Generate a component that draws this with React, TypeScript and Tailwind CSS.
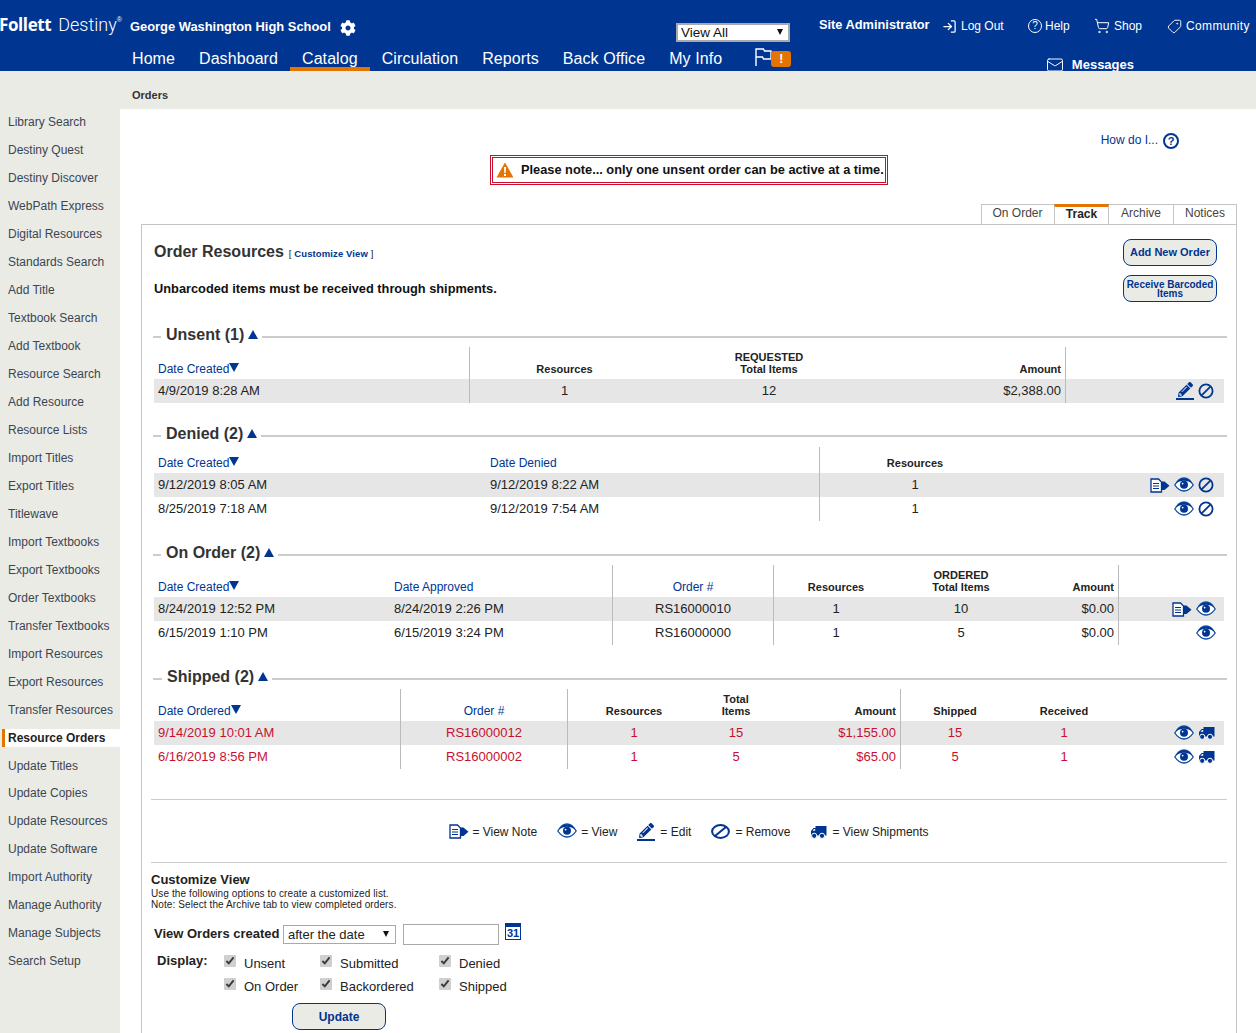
import { FaCog, FaPencilAlt } from 'react-icons/fa';
import { LogIn, ShoppingCart, Tag, Mail } from 'lucide-react';

const sideTop = [
    'Library Search', 'Destiny Quest', 'Destiny Discover', 'WebPath Express', 'Digital Resources',
    'Standards Search', 'Add Title', 'Textbook Search', 'Add Textbook', 'Resource Search', 'Add Resource',
    'Resource Lists', 'Import Titles', 'Export Titles', 'Titlewave', 'Import Textbooks', 'Export Textbooks',
    'Order Textbooks', 'Transfer Textbooks', 'Import Resources', 'Export Resources', 'Transfer Resources',
    'Resource Orders', 'Update Titles',
];
const sideBottom = [
    'Update Copies', 'Update Resources', 'Update Software', 'Import Authority', 'Manage Authority',
    'Manage Subjects', 'Search Setup',
];
const navItems = ['Home', 'Dashboard', 'Catalog', 'Circulation', 'Reports', 'Back Office', 'My Info'];

function BanIcon() {
    return (
        <svg width="16" height="16" viewBox="0 0 16 16" fill="none" stroke="#003591" strokeWidth="1.8" className="shrink-0">
            <circle cx="8" cy="8" r="6.6" />
            <path d="M3.6 12.4 12.4 3.6" />
        </svg>
    );
}

function EyeIcon() {
    return (
        <svg width="20" height="15" viewBox="0 0 20 15" className="mb-[2px] shrink-0">
            <path d="M0.8 8C3.5 3.4 6.5 1 10 1s6.5 2.4 9.2 7c-2.7 4-5.7 6-9.2 6S3.500 12 0.8 8z" fill="#fff" stroke="#0a4aa0" strokeWidth="1.3" />
            <path d="M1.500 6.800C4 3 6.800 1.400 10 1.400s6 1.600 8.500 5.400C16 4.700 13 3.700 10 3.700S4 4.700 1.500 6.800z" fill="#003591" />
            <circle cx="10" cy="7.800" r="4" fill="#003591" />
            <circle cx="8.600" cy="6.600" r="0.9" fill="#fff" />
        </svg>
    );
}

function EditIcon() {
    return (
        <span className="flex h-[18px] w-[18px] shrink-0 flex-col items-center justify-end border-b-2 border-[#003591]">
            <FaPencilAlt className="mb-px h-[15px] w-[15px] text-[#003591]" />
        </span>
    );
}

function NoteIcon() {
    return (
        <svg width="20" height="15" viewBox="0 0 20 15" className="shrink-0">
            <path d="M1 1h7.500l3 3v10H1z" fill="#fff" stroke="#003591" strokeWidth="1.3" />
            <path d="M3 5.500h6M3 8h6M3 10.500h6" stroke="#003591" strokeWidth="1.1" />
            <path d="M12 3.500h2.500L19.500 7.800 14.500 12H12z" fill="#003591" />
        </svg>
    );
}

function TruckIcon() {
    return (
        <svg width="17" height="14" viewBox="0 0 17 14" className="shrink-0">
            <path d="M5.500 1h11v9.500H1V6l2.500-3h2z" fill="#003591" />
            <path d="M2.600 5.800 4 4h1.200v1.800z" fill="#fff" />
            <circle cx="4.200" cy="10.800" r="2.600" fill="#003591" stroke="#fff" strokeWidth="1" />
            <circle cx="12" cy="10.800" r="2.600" fill="#003591" stroke="#fff" strokeWidth="1" />
        </svg>
    );
}

function SortDown() {
    return <span className="inline-block h-0 w-0 border-x-[5px] border-t-[9px] border-x-transparent border-t-[#003591] align-[1px]" />;
}

function SectionHead({ title, wide }: { title: string; wide?: boolean }) {
    return (
        <div className="flex h-[20px] items-center">
            <div className={`mt-[6px] h-[2px] shrink-0 bg-[#cccccc] ${wide ? 'w-[9px]' : 'w-[8px]'}`} />
            <h3 className="ml-[5px] whitespace-nowrap pt-[2px] text-[16px] font-bold leading-[20px] text-[#333333]">{title}</h3>
            <span className="mx-[4px] mt-[1px] h-0 w-0 border-x-[5.5px] border-b-[9px] border-x-transparent border-b-[#003591]" />
            <div className="mt-[6px] h-[2px] grow bg-[#cccccc]" />
        </div>
    );
}

function Link({ children }: { children: React.ReactNode }) {
    return <span className="text-[12px] font-normal text-[#003591]">{children}</span>;
}

function DateSort({ label }: { label: string }) {
    return (
        <Link>
            {label}
            <SortDown />
        </Link>
    );
}

type TableProps = {
    grid: string;
    cells: string[];
    head: React.ReactNode[];
    rows: React.ReactNode[][];
    headHeight: string;
    red?: boolean;
};

function OrderTable({ grid, cells, head, rows, headHeight, red }: TableProps) {
    return (
        <div className="ml-px w-[1070px]">
            <div className={`grid ${grid} ${headHeight} text-[11px] font-bold leading-[12px] text-[#222222]`}>
                {head.map((h, i) => (
                    <div key={i} className={`flex flex-col justify-end pb-[4px] ${cells[i]}`}>{h}</div>
                ))}
            </div>
            {rows.map((row, r) => (
                <div
                    key={r}
                    className={`grid h-[24px] ${grid} text-[13px] leading-[24px] ${r === 0 ? 'bg-[#e6e6e6]' : ''} ${red ? 'text-[#c8102e]' : 'text-[#222222]'}`}
                >
                    {row.map((c, i) => (
                        <div key={i} className={cells[i]}>{c}</div>
                    ))}
                </div>
            ))}
        </div>
    );
}

function Actions({ pad, children }: { pad: string; children: React.ReactNode }) {
    return <div className={`flex h-full items-center justify-end gap-[4px] ${pad}`}>{children}</div>;
}

function Check({ label }: { label: string }) {
    return (
        <label className="flex h-[23px] items-center gap-[8px] text-[13px] text-[#222222]">
            <input type="checkbox" defaultChecked className="mb-[6px] h-[12px] w-[12px] accent-[#d0d0d0]" />
            {label}
        </label>
    );
}

function Dropdown({ value, box, text }: { value: string; box: string; text: string }) {
    return (
        <div className={`relative ${box}`}>
            <select defaultValue={value} className={`block h-full w-full appearance-none bg-white ${text}`}>
                <option>{value}</option>
            </select>
            <span className="pointer-events-none absolute right-[7px] top-[6px] h-0 w-0 border-x-[3.5px] border-t-[6px] border-x-transparent border-t-[#111111]" />
        </div>
    );
}

const divider = 'border-r border-[#bbbbbb]';

export default function App() {
    return (
        <div className="flex h-screen flex-col overflow-hidden bg-white font-['Liberation_Sans',Arial,sans-serif]">
            {/* top bar */}
            <header className="h-[71px] shrink-0 overflow-hidden bg-[#003591] text-white">
                <div className="flex h-[44px] items-start">
                    <div className="mt-[13px] flex w-[130px] items-start whitespace-nowrap leading-[24px]">
                        <span className="-ml-px text-[17px] font-bold font-['Open_Sans',sans-serif] tracking-[-0.4px]">Follett</span>
                        <span className="ml-[7px] text-[18px] font-light font-['Roboto',sans-serif]">Destiny</span>
                        <span className="text-[7px] leading-[14px]">®</span>
                    </div>
                    <div className="mt-[19px] w-[210px] whitespace-nowrap text-[12.9px] font-bold leading-[15px]">George Washington High School</div>
                    <div className="mt-[20px] w-[336px]"><FaCog className="h-[16px] w-[16px]" /></div>
                    <Dropdown value="View All" box="mt-[23px] h-[19px] w-[114px]" text="border-2 border-[#a9a9a9] pl-[3px] text-[13.5px] leading-[15px] text-[#111111]" />
                    <div className="ml-[29px] mt-[17px] w-[123px] whitespace-nowrap text-[12.8px] font-bold leading-[16px]">Site Administrator</div>
                    <div className="mt-[18px] flex w-[86px] items-center gap-[4px] text-[12px] leading-[16px]"><LogIn className="h-[15px] w-[15px]" />Log Out</div>
                    <div className="mt-[18px] flex w-[66px] items-center gap-[3px] text-[12px] leading-[16px]">
                        <span className="flex h-[14px] w-[14px] items-center justify-center rounded-full border border-white text-[10px] leading-none">?</span>Help
                    </div>
                    <div className="mt-[18px] flex w-[73px] items-center gap-[4px] text-[12px] leading-[16px]"><ShoppingCart className="h-[16px] w-[16px]" strokeWidth={1.5} />Shop</div>
                    <div className="mt-[18px] flex items-center gap-[4px] whitespace-nowrap text-[12px] leading-[16px] tracking-[0.35px]"><Tag className="h-[15px] w-[15px] -scale-x-100" strokeWidth={1.5} />Community</div>
                </div>
                <div className="flex h-[27px] pl-[120px]">
                    {navItems.map((n) => (
                        <a key={n} className={`box-border h-[27px] px-[12px] pt-[5px] text-[16px] leading-[20px] tracking-[0.08px] ${n === 'Catalog' ? 'border-b-4 border-[#e37400]' : ''}`}>{n}</a>
                    ))}
                    <div className="relative ml-[21px] mt-[4px] h-[19px] w-[17px]">
                        <svg width="17" height="19" viewBox="0 0 17 19" fill="none" stroke="#fff" strokeWidth="1.4">
                            <path d="M1 18V1h7.500l1 2H16v8H8.500l-1-2H1" />
                        </svg>
                        <span className="absolute left-[16px] top-[3px] flex h-[16px] w-[20px] items-center justify-center rounded-[3px] bg-[#e37400] text-[12px] font-bold leading-none">!</span>
                    </div>
                    <div className="ml-auto mr-[122px] mt-[13px] flex items-start gap-[8px]">
                        <Mail className="mt-[-1px] h-[18px] w-[18px]" strokeWidth={1.3} />
                        <span className="text-[13px] font-bold leading-[15px]">Messages</span>
                    </div>
                </div>
            </header>

            {/* breadcrumb */}
            <div className="h-[38px] shrink-0 bg-[#ebebe6] pl-[132px] pt-[18px] text-[11px] font-bold leading-[13px] text-[#333333]">Orders</div>

            <div className="flex min-h-0 grow">
                {/* side menu */}
                <aside className="w-[120px] shrink-0 bg-[#ebebe6] text-[12px] text-[#3a4652]">
                    <ul className="-mt-px">
                        {sideTop.map((s) =>
                            s === 'Resource Orders' ? (
                                <li key={s} className="flex h-[28px] items-center">
                                    <div className="ml-[2px] flex h-[18px] grow items-center border-l-[3px] border-[#e37400] bg-white pl-[3px] font-bold text-[#222222]">{s}</div>
                                </li>
                            ) : (
                                <li key={s} className="flex h-[28px] items-center whitespace-nowrap pl-[8px]">{s}</li>
                            ),
                        )}
                    </ul>
                    <ul className="-mt-px">
                        {sideBottom.map((s) => (
                            <li key={s} className="flex h-[28px] items-center whitespace-nowrap pl-[8px]">{s}</li>
                        ))}
                    </ul>
                </aside>

                <main className="flex min-w-0 grow flex-col pl-[21px] pr-[19px]">
                    <div className="flex h-[46px] items-start justify-end gap-[5px] pr-[58px] pt-[23px] text-[12px] leading-[16px] text-[#003591]">
                        How do I...
                        <span className="mt-px flex h-[16px] w-[16px] items-center justify-center rounded-full border-2 border-[#003591] text-[11px] font-bold leading-none">?</span>
                    </div>
                    <div className="flex justify-center">
                        <div className="flex h-[30px] w-[398px] items-center gap-[7px] border-[3px] border-double border-[#c8102e] pl-[3px] text-[12.8px] font-bold text-[#111111]">
                            <svg width="18" height="16" viewBox="0 0 18 16" className="shrink-0">
                                <path d="M9 0.500 17.500 15.500H0.500z" fill="#e37400" />
                                <path d="M8 5h2l-.3 6H8.300zM8 12h2v2H8z" fill="#fff" />
                            </svg>
                            <span className="whitespace-nowrap">Please note... only one unsent order can be active at a time.</span>
                        </div>
                    </div>

                    {/* tabs */}
                    <div className="mt-[19px] flex h-[20px] justify-end text-[12px] leading-[16px] text-[#444444]">
                        <div className="w-[73px] border-l border-t border-[#c4c4c4] pr-px text-center">On Order</div>
                        <div className="w-[55px] border-x border-t-[3px] border-x-[#c4c4c4] border-t-[#e37400] text-center font-bold leading-[14px] text-[#222222]">Track</div>
                        <div className="w-[64px] border-t border-[#c4c4c4] text-center">Archive</div>
                        <div className="w-[64px] border-x border-t border-[#c4c4c4] text-center">Notices</div>
                    </div>

                    <section className="grow border-x border-t border-[#c4c4c4] pl-[11px] pr-[9px]">
                        <div className="flex h-[99px] justify-between">
                            <div className="pl-px">
                                <div className="mt-[17px] flex items-baseline gap-[5px] leading-[20px]">
                                    <h2 className="text-[16px] font-bold text-[#333333]">Order Resources</h2>
                                    <span className="text-[9.5px] font-bold tracking-[0.1px] text-[#003591]"><span className="font-normal text-[#222222]">[</span> Customize View <span className="font-normal text-[#222222]">]</span></span>
                                </div>
                                <p className="mt-[17px] text-[12.8px] font-bold leading-[16px] text-[#111111]">Unbarcoded items must be received through shipments.</p>
                            </div>
                            <div className="mr-[10px] mt-[14px] flex w-[94px] flex-col gap-[9px] text-center font-bold text-[#003591]">
                                <button className="h-[27px] rounded-lg border border-[#003591] bg-[#ebebe6] text-[11px]">Add New Order</button>
                                <button className="h-[27px] rounded-lg border border-[#003591] bg-[#ebebe6] text-[10px] leading-[9px]">Receive Barcoded Items</button>
                            </div>
                        </div>

                        <SectionHead title="Unsent (1)" />
                        <div className="mt-[3px]">
                            <OrderTable
                                grid="grid-cols-[316px_189px_220px_187px_1fr]"
                                headHeight="h-[32px]"
                                cells={[`pl-[4px] ${divider}`, 'text-center', 'text-center', `pr-[4px] text-right ${divider}`, '']}
                                head={[
                                    <DateSort label="Date Created" />,
                                    'Resources',
                                    <>REQUESTED<br />Total Items</>,
                                    'Amount',
                                    '',
                                ]}
                                rows={[['4/9/2019 8:28 AM', '1', '12', '$2,388.00', <Actions pad="pr-[10px]"><EditIcon /><BanIcon /></Actions>]]}
                            />
                        </div>

                        <div className="mt-[20px]"><SectionHead title="Denied (2)" /></div>
                        <div className="mt-[4px]">
                            <OrderTable
                                grid="grid-cols-[332px_334px_190px_1fr]"
                                headHeight="h-[26px]"
                                cells={['pl-[4px]', `pl-[4px] ${divider}`, 'text-center', '']}
                                head={[<DateSort label="Date Created" />, <Link>Date Denied</Link>, 'Resources', '']}
                                rows={[
                                    ['9/12/2019 8:05 AM', '9/12/2019 8:22 AM', '1', <Actions pad="pr-[10px]"><NoteIcon /><EyeIcon /><BanIcon /></Actions>],
                                    ['8/25/2019 7:18 AM', '9/12/2019 7:54 AM', '1', <Actions pad="pr-[10px]"><EyeIcon /><BanIcon /></Actions>],
                                ]}
                            />
                        </div>

                        <div className="mt-[21px]"><SectionHead title="On Order (2)" /></div>
                        <div className="mt-[3px]">
                            <OrderTable
                                grid="grid-cols-[236px_223px_161px_124px_126px_95px_1fr]"
                                headHeight="h-[32px]"
                                cells={['pl-[4px]', `pl-[4px] ${divider}`, `text-center ${divider}`, 'text-center', 'text-center', `pr-[4px] text-right ${divider}`, '']}
                                head={[
                                    <DateSort label="Date Created" />,
                                    <Link>Date Approved</Link>,
                                    <Link>Order #</Link>,
                                    'Resources',
                                    <>ORDERED<br />Total Items</>,
                                    'Amount',
                                    '',
                                ]}
                                rows={[
                                    ['8/24/2019 12:52 PM', '8/24/2019 2:26 PM', 'RS16000010', '1', '10', '$0.00', <Actions pad="pr-[8px]"><NoteIcon /><EyeIcon /></Actions>],
                                    ['6/15/2019 1:10 PM', '6/15/2019 3:24 PM', 'RS16000000', '1', '5', '$0.00', <Actions pad="pr-[8px]"><EyeIcon /></Actions>],
                                ]}
                            />
                        </div>

                        <div className="mt-[21px]"><SectionHead title="Shipped (2)" wide /></div>
                        <div className="mt-[3px]">
                            <OrderTable
                                red
                                grid="grid-cols-[247px_167px_132px_72px_129px_108px_110px_1fr]"
                                headHeight="h-[32px]"
                                cells={[`pl-[4px] ${divider}`, `text-center ${divider}`, 'text-center', 'text-center', `pr-[4px] text-right ${divider}`, 'text-center', 'text-center', '']}
                                head={[
                                    <DateSort label="Date Ordered" />,
                                    <Link>Order #</Link>,
                                    'Resources',
                                    <>Total<br />Items</>,
                                    'Amount',
                                    'Shipped',
                                    'Received',
                                    '',
                                ]}
                                rows={[
                                    ['9/14/2019 10:01 AM', 'RS16000012', '1', '15', '$1,155.00', '15', '1', <Actions pad="pr-[9px]"><EyeIcon /><TruckIcon /></Actions>],
                                    ['6/16/2019 8:56 PM', 'RS16000002', '1', '5', '$65.00', '5', '1', <Actions pad="pr-[9px]"><EyeIcon /><TruckIcon /></Actions>],
                                ]}
                            />
                        </div>

                        <div className="-ml-[2px]">
                            {/* legend */}
                            <div className="mt-[30px] flex h-[64px] items-center justify-center gap-[20px] border-y border-[#cccccc] pt-px text-[12px] text-[#222222]">
                                <span className="flex items-center gap-[3px]"><NoteIcon />= View Note</span>
                                <span className="flex items-center gap-[4px]"><EyeIcon />= View</span>
                                <span className="flex items-center gap-[5px]"><EditIcon />= Edit</span>
                                <span className="flex items-center gap-[5px]"><svg width="19" height="15" viewBox="0 0 19 15" fill="none" stroke="#003591" strokeWidth="2"><ellipse cx="9.500" cy="7.500" rx="8.400" ry="6.400" /><path d="M4 12 15 3" /></svg>= Remove</span>
                                <span className="flex items-center gap-[5px]"><TruckIcon />= View Shipments</span>
                            </div>

                            {/* customize */}
                            <h4 className="mt-[9px] text-[13px] font-bold leading-[16px] text-[#222222]">Customize View</h4>
                            <p className="text-[10px] leading-[11px] tracking-[0.1px] text-[#222222]">
                                Use the following options to create a customized list.<br />
                                Note: Select the Archive tab to view completed orders.
                            </p>
                            <div className="ml-[3px] mt-[14px] flex h-[23px] items-start">
                                <span className="w-[129px] whitespace-nowrap pt-[2px] text-[13px] font-bold leading-[16px] text-[#222222]">View Orders created</span>
                                <Dropdown value="after the date" box="mt-px h-[19px] w-[113px]" text="border border-[#a9a9a9] pl-[4px] text-[13px] leading-[15px] text-[#222222]" />
                                <input className="ml-[7px] h-[21px] w-[96px] border border-[#a9a9a9] bg-white" />
                                <span className="ml-[6px] mt-[-1px] flex h-[17px] w-[16px] flex-col border border-[#003591] bg-white text-center text-[11px] font-bold leading-[12px] text-[#003591]">
                                    <span className="h-[3px] shrink-0 bg-[#003591]" />31
                                </span>
                            </div>
                            <div className="ml-[6px] mt-[5px] flex">
                                <span className="w-[67px] text-[13px] font-bold leading-[18px] text-[#222222]">Display:</span>
                                <div className="grid grid-cols-[96px_119px_90px]">
                                    <Check label="Unsent" />
                                    <Check label="Submitted" />
                                    <Check label="Denied" />
                                    <Check label="On Order" />
                                    <Check label="Backordered" />
                                    <Check label="Shipped" />
                                </div>
                            </div>
                            <button className="ml-[141px] mt-[5px] h-[27px] w-[94px] rounded-lg border border-[#003591] bg-[#ebebe6] text-[12px] font-bold text-[#003591]">Update</button>
                        </div>
                    </section>
                </main>
            </div>
        </div>
    );
}
